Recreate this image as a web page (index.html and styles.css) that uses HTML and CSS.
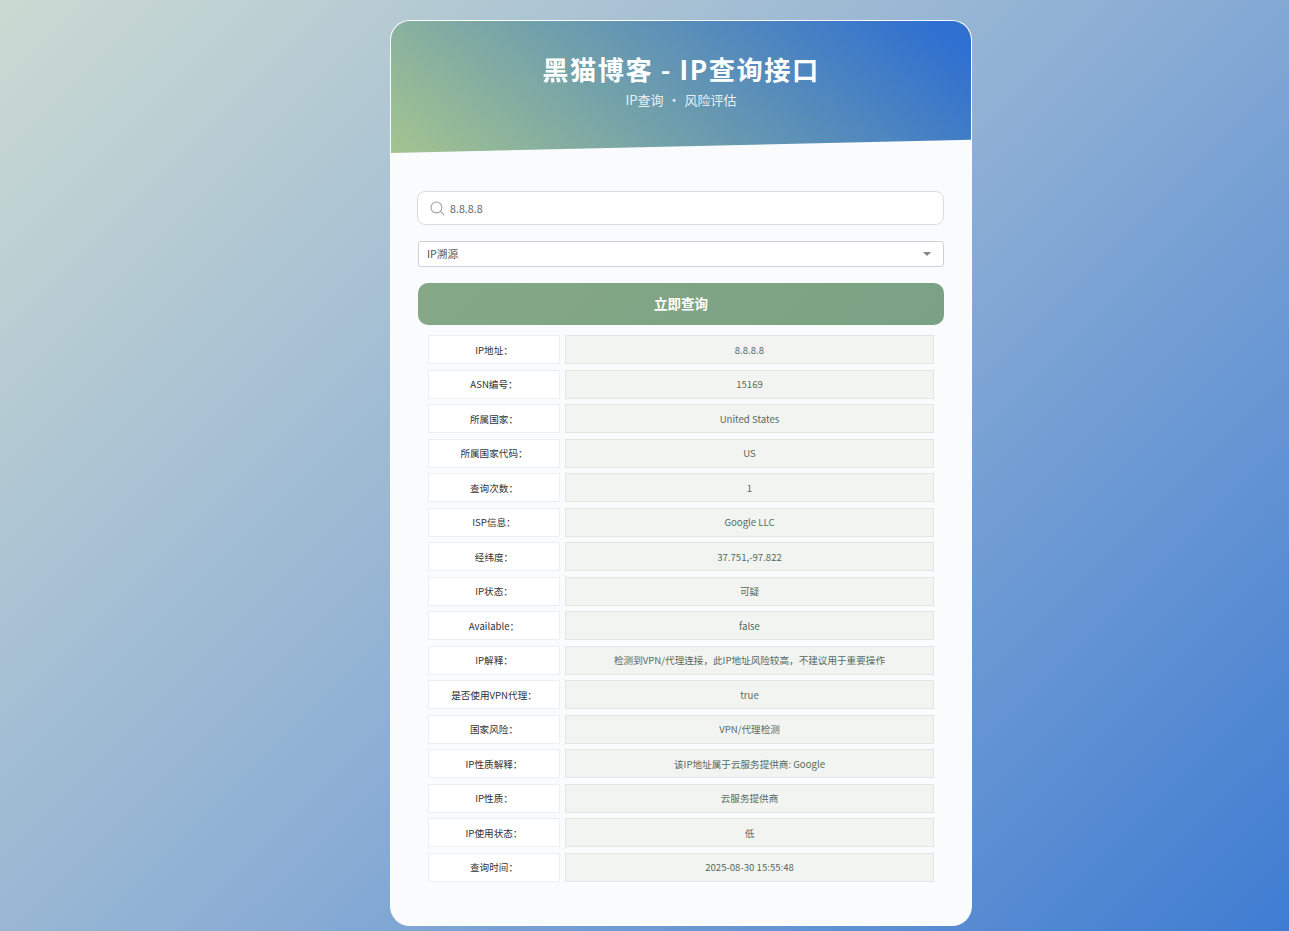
FILE: index.html
```html
<!DOCTYPE html>
<html lang="zh-CN">
<head>
<meta charset="utf-8">
<title>黑猫博客 - IP查询接口</title>
<link rel="stylesheet" href="styles.css">
</head>
<body>
<main class="card">
  <header class="hero">
    <h1 class="hero-title">黑猫博客 - IP查询接口</h1>
    <p class="hero-sub">IP查询 · 风险评估</p>
  </header>
  <section class="content">
    <div class="search">
      <svg class="search-icon" viewBox="0 0 1024 1024" width="15" height="15" aria-hidden="true"><path fill="none" stroke="#9a9da3" stroke-width="72" stroke-linecap="round" d="M440 70a370 370 0 1 1 0 740a370 370 0 0 1 0-740zM710 710l240 240"/></svg>
      <span class="search-value">8.8.8.8</span>
    </div>
    <div class="select">
      <span>IP溯源</span>
      <span class="caret"></span>
    </div>
    <button class="submit">立即查询</button>
    <div class="results">
      <div class="label">IP地址：</div><div class="value">8.8.8.8</div>
      <div class="label">ASN编号：</div><div class="value">15169</div>
      <div class="label">所属国家：</div><div class="value">United States</div>
      <div class="label">所属国家代码：</div><div class="value">US</div>
      <div class="label">查询次数：</div><div class="value">1</div>
      <div class="label">ISP信息：</div><div class="value">Google LLC</div>
      <div class="label">经纬度：</div><div class="value">37.751,-97.822</div>
      <div class="label">IP状态：</div><div class="value">可疑</div>
      <div class="label">Available：</div><div class="value">false</div>
      <div class="label">IP解释：</div><div class="value">检测到VPN/代理连接，此IP地址风险较高，不建议用于重要操作</div>
      <div class="label">是否使用VPN代理：</div><div class="value">true</div>
      <div class="label">国家风险：</div><div class="value">VPN/代理检测</div>
      <div class="label">IP性质解释：</div><div class="value">该IP地址属于云服务提供商: Google</div>
      <div class="label">IP性质：</div><div class="value">云服务提供商</div>
      <div class="label">IP使用状态：</div><div class="value">低</div>
      <div class="label">查询时间：</div><div class="value">2025-08-30 15:55:48</div>
    </div>
  </section>
</main>
</body>
</html>
```
FILE: styles.css
```css
* { box-sizing: border-box; }
html, body { margin: 0; height: 931px; overflow: hidden; }
body {
  background: linear-gradient(135deg, #cbdad2 0%, #8fb0d4 50%, #3f7cd2 100%);
  font-family: "Noto Sans CJK SC", sans-serif;
  padding: 20px 0 0 390px;
}
.card {
  width: 582px;
  height: 906px;
  background: #f9fbfd;
  border: 1px solid rgba(255,255,255,.85);
  border-radius: 20px;
  overflow: hidden;
}
.hero {
  height: 132px;
  padding-top: 29px;
  text-align: center;
  color: #fff;
  background: linear-gradient(40deg, #a3c48f 0%, #3070d0 94%);
  clip-path: polygon(0 0, 100% 0, 100% 90%, 0 100%);
}
.hero-title {
  margin: 0;
  font-size: 26.2px;
  line-height: 38px;
  font-weight: 700;
  letter-spacing: 1.55px;
}
.hero-sub {
  margin: 2px 0 0;
  font-size: 13px;
  line-height: 20px;
  opacity: .85;
  word-spacing: 1px;
}
.content { padding: 38px 27px 0; }
.search {
  display: flex;
  align-items: center;
  gap: 5px;
  height: 34px;
  margin-left: -1px;
  padding-left: 12px;
  background: #fff;
  border: 1px solid #d9dbde;
  border-radius: 8px;
  font-size: 10.67px;
  color: #606266;
}
.select {
  display: flex;
  align-items: center;
  justify-content: space-between;
  height: 26px;
  margin-top: 16px;
  padding: 0 12px 1px 8px;
  background: #fff;
  border: 1px solid #cfd1d4;
  border-radius: 3px;
  font-size: 10.67px;
  color: #55585f;
}
.caret {
  width: 0;
  height: 0;
  border-left: 4px solid transparent;
  border-right: 4px solid transparent;
  border-top: 4px solid #808388;
  margin-top: 1px;
}
.submit {
  display: block;
  width: 100%;
  height: 42px;
  margin-top: 16px;
  padding: 0 0 3px;
  border: 0;
  border-radius: 10px;
  background: linear-gradient(135deg, #85a887, #7aa184);
  color: #fff;
  font: 700 13.5px "Noto Sans CJK SC", sans-serif;
}
.results {
  display: grid;
  grid-template-columns: 132px 369px;
  column-gap: 5px;
  row-gap: 5.47px;
  margin: 10.47px 0 0 10px;
  font-size: 9.6px;
}
.label, .value {
  display: flex;
  align-items: center;
  justify-content: center;
  height: 29px;
  border: 1px solid #eeeff0;
}
.label { background: #fff; color: #2f3235; }
.value { background: #f2f4f1; border-color: #e3e5e3; color: #566a5f; }
```
